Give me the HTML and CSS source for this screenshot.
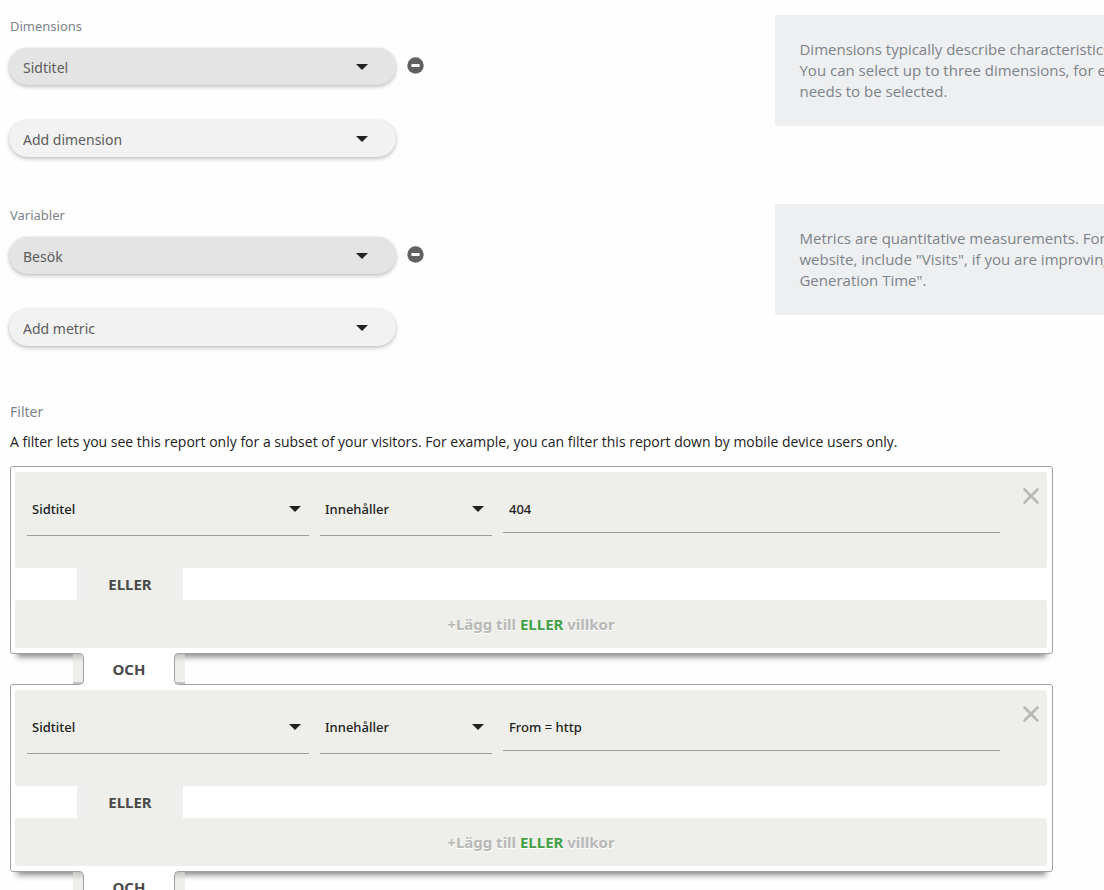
FILE: index.html
```
<!DOCTYPE html>
<html lang="sv">
<head>
<meta charset="utf-8">
<title>Custom report</title>
<link rel="stylesheet" href="styles.css">
</head>
<body>
<main class="page">
  <section class="group">
    <div class="fields">
      <label class="label" for="dim1">Dimensions</label>
      <div class="field">
        <div class="pill chosen"><select id="dim1"><option>Sidtitel</option></select></div>
        <button class="remove" type="button" aria-label="Remove dimension"><svg width="17" height="17" viewBox="0 0 17 17"><circle cx="8.5" cy="8.5" r="8.2" fill="#616161"/><rect x="4.3" y="7" width="8.4" height="3" rx="1" fill="#fff"/></svg></button>
      </div>
      <div class="field">
        <div class="pill"><select aria-label="Add dimension"><option>Add dimension</option></select></div>
      </div>
    </div>
    <p class="help">Dimensions typically describe characteristics<br>You can select up to three dimensions, for ex<br>needs to be selected.</p>
  </section>
  <section class="group">
    <div class="fields">
      <label class="label" for="met1">Variabler</label>
      <div class="field">
        <div class="pill chosen"><select id="met1"><option>Besök</option></select></div>
        <button class="remove" type="button" aria-label="Remove metric"><svg width="17" height="17" viewBox="0 0 17 17"><circle cx="8.5" cy="8.5" r="8.2" fill="#616161"/><rect x="4.3" y="7" width="8.4" height="3" rx="1" fill="#fff"/></svg></button>
      </div>
      <div class="field">
        <div class="pill"><select aria-label="Add metric"><option>Add metric</option></select></div>
      </div>
    </div>
    <p class="help">Metrics are quantitative measurements. For e<br>website, include "Visits", if you are improving<br>Generation Time".</p>
  </section>
  <section class="filter">
    <h2 class="filter-title">Filter</h2>
    <p class="filter-text">A filter lets you see this report only for a subset of your visitors. For example, you can filter this report down by mobile device users only.</p>
    <div class="card">
      <div class="condition">
        <div class="line"><select aria-label="Segment"><option>Sidtitel</option></select></div>
        <div class="line"><select aria-label="Match"><option>Innehåller</option></select></div>
        <input class="value" type="text" aria-label="Value" value="404">
        <button class="close" type="button" aria-label="Close"><svg width="16" height="16" viewBox="0 0 16 16"><path d="M1.5 1.5l13 13M14.5 1.5l-13 13" stroke="#b8b9b5" stroke-width="2.6" stroke-linecap="round"/></svg></button>
      </div>
      <div class="or"><span>ELLER</span></div>
      <button class="add" type="button">+Lägg till <b>ELLER</b> villkor</button>
    </div>
    <div class="and"><i class="edge left"></i><span>OCH</span><i class="edge right"></i></div>
    <div class="card">
      <div class="condition">
        <div class="line"><select aria-label="Segment"><option>Sidtitel</option></select></div>
        <div class="line"><select aria-label="Match"><option>Innehåller</option></select></div>
        <input class="value" type="text" aria-label="Value" value="From = http">
        <button class="close" type="button" aria-label="Close"><svg width="16" height="16" viewBox="0 0 16 16"><path d="M1.5 1.5l13 13M14.5 1.5l-13 13" stroke="#b8b9b5" stroke-width="2.6" stroke-linecap="round"/></svg></button>
      </div>
      <div class="or"><span>ELLER</span></div>
      <button class="add" type="button">+Lägg till <b>ELLER</b> villkor</button>
    </div>
    <div class="and"><i class="edge left"></i><span>OCH</span><i class="edge right"></i></div>
  </section>
</main>
</body>
</html>
```
FILE: styles.css
```
* { box-sizing: border-box; }
html { overflow: hidden; }
body {
  margin: 0;
  background: #fefefe;
  color: #212121;
  font: 14px/21px "Noto Sans", "Open Sans", sans-serif;
}
button, select, input { font: inherit; color: inherit; border: 0; background: none; padding: 0; margin: 0; border-radius: 0; }
select { appearance: none; width: 100%; outline: 0; }
button { cursor: pointer; }
svg { display: block; }

.page { padding: 15px 0 0 10px; }
.group {
  display: grid;
  grid-template-columns: 233fr 100fr;
  align-items: start;
  height: 189px;
}
.label { display: block; color: #7d838a; font-size: 13px; line-height: 22px; margin-bottom: 11px; }
.field { display: flex; align-items: center; gap: 11px; height: 37px; margin: 0 0 35px -1px; }
.remove { margin-bottom: 3px; }
.pill {
  position: relative;
  width: 387px;
  height: 37px;
  border-radius: 19px;
  background: #f2f2f2;
  color: #5c5c5c;
  box-shadow: 0 2px 4px rgba(0, 0, 0, .22), 0 0 3px rgba(0, 0, 0, .08);
}
.pill.chosen { background: #e4e4e4; }
.pill select { height: 37px; padding: 1px 48px 0 14px; border-radius: 19px; }
.pill::after, .line::after {
  content: "";
  position: absolute;
  top: 50%;
  right: 28px;
  margin-top: -3px;
  border: 6px solid transparent;
  border-top-color: #212121;
  border-bottom: 0;
  pointer-events: none;
}
.help {
  margin: 0;
  padding: 24px;
  padding-right: 0;
  border-radius: 2px 0 0 2px;
  background: #eeeff1;
  color: #7d838a;
  font-family: "Open Sans", "Noto Sans", sans-serif;
  font-size: 15px;
  white-space: nowrap;
  overflow: hidden;
}

.filter { padding-right: 51px; }
.filter-title { margin: 8px 0 9px; font-size: 14px; line-height: 21px; font-weight: 400; color: #7d838a; }
.filter-text { margin: 0 0 14px; font-family: "Open Sans", "Noto Sans", sans-serif; }
.card {
  padding: 5px 5px 5px 4px;
  border: 1px solid #a0a09e;
  border-radius: 3px;
  background: #fff;
  box-shadow: 0 10px 6px -7px #888;
}
.condition {
  display: grid;
  grid-template-columns: 282fr 172fr 497fr 36px;
  gap: 11px;
  align-items: center;
  padding: 11px 0 32px 12px;
  border-radius: 3px;
  background: #eeefea;
  font-size: 13px;
  font-weight: 500;
}
.line { position: relative; border-bottom: 1px solid #9c9e9b; }
.line::after { right: 8px; }
.line select { height: 52px; padding: 0 24px 0 5px; display: block; }
.value { width: 100%; height: 47px; padding: 0 6px; border-bottom: 1px solid #9c9e9b; outline: 0; }
.close { align-self: start; margin: 5px 0 0 12px; width: 16px; }
.or { padding-left: 62px; }
.or span {
  display: block;
  width: 106px;
  line-height: 32px;
  text-align: center;
  font-size: 15px;
  font-weight: 700;
  color: #4a4a4a;
  background: #eeefea;
  border: solid #eef0f0;
  border-width: 0 10px;
}
.add {
  display: block;
  width: 100%;
  height: 48px;
  border-radius: 3px;
  background: #eeefea;
  color: #b8b8b8;
  font-size: 15px;
  font-weight: 700;
  text-shadow: 0 1px 0 #fff;
}
.add b { color: #43a047; font-weight: 700; }
.and { position: relative; display: flex; margin: -1px 0; padding-left: 63px; height: 32px; }
.and span { width: 102px; margin: 0 -6px; line-height: 32px; text-align: center; font-size: 15px; font-weight: 700; color: #4a4a4a; background: #fff; }
.edge { position: relative; width: 11px; border: 1px solid #a0a09e; background: linear-gradient(#c4c4c2, #eeefea 8px 28px, #c4c4c2 28px); }
.edge.left { border-left: 0; border-radius: 0 5px 5px 0; }
.edge.right { border-right: 0; border-radius: 5px 0 0 5px; }
```
